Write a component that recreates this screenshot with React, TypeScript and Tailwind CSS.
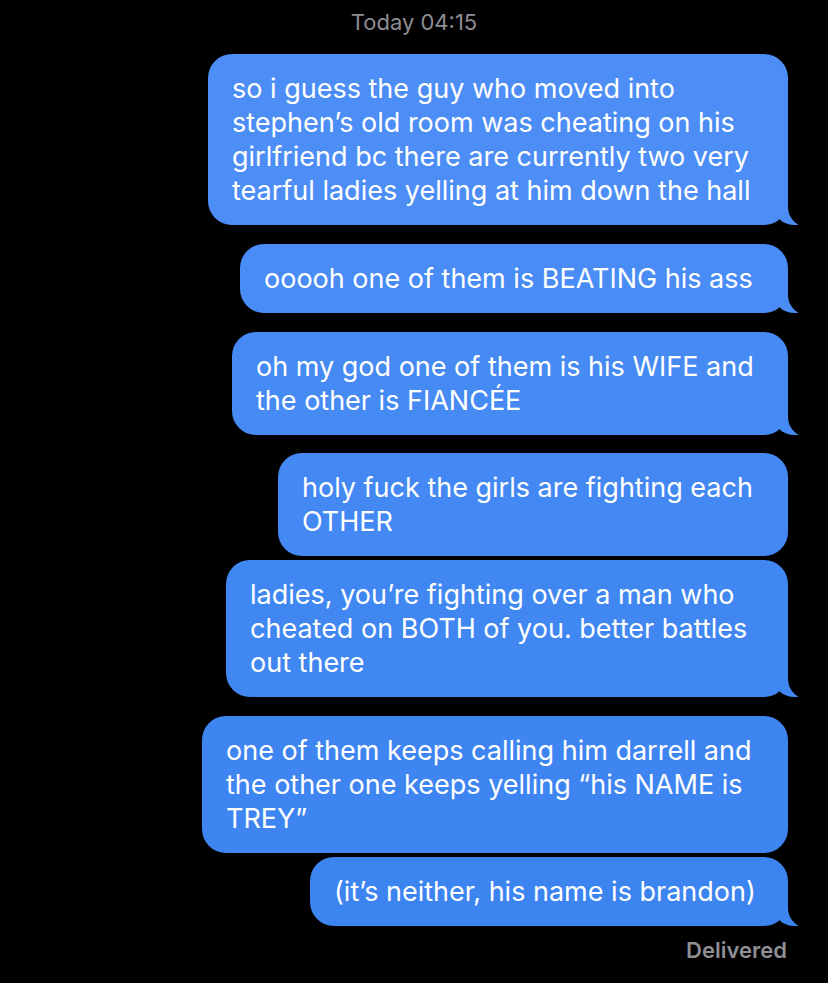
import React from 'react'

// bubbles, top to bottom. colour darkens slightly down the screen like iMessage
const messages = [
  {
    lines: [
      'so i guess the guy who moved into',
      'stephen’s old room was cheating on his',
      'girlfriend bc there are currently two very',
      'tearful ladies yelling at him down the hall',
    ],
    width: 'w-[580px]',
    gap: 'mt-0',
    tail: true,
    bg: 'bg-[#4d8ef6]',
    fill: 'fill-[#4d8ef6]',
  },
  {
    lines: ['ooooh one of them is BEATING his ass'],
    width: 'w-[548px]',
    gap: 'mt-[19px]',
    tail: true,
    bg: 'bg-[#498cf5]',
    fill: 'fill-[#498cf5]',
  },
  {
    lines: ['oh my god one of them is his WIFE and', 'the other is FIANCÉE'],
    width: 'w-[556px]',
    gap: 'mt-[19px]',
    tail: true,
    bg: 'bg-[#468af4]',
    fill: 'fill-[#468af4]',
  },
  {
    lines: ['holy fuck the girls are fighting each', 'OTHER'],
    width: 'w-[510px]',
    gap: 'mt-[18px]',
    tail: false,
    bg: 'bg-[#4388f3]',
    fill: 'fill-[#4388f3]',
  },
  {
    lines: [
      'ladies, you’re fighting over a man who',
      'cheated on BOTH of you. better battles',
      'out there',
    ],
    width: 'w-[562px]',
    gap: 'mt-1',
    tail: true,
    bg: 'bg-[#4087f2]',
    fill: 'fill-[#4087f2]',
  },
  {
    lines: [
      'one of them keeps calling him darrell and',
      'the other one keeps yelling “his NAME is',
      'TREY”',
    ],
    width: 'w-[586px]',
    gap: 'mt-[19px]',
    tail: false,
    bg: 'bg-[#3e85f1]',
    fill: 'fill-[#3e85f1]',
  },
  {
    lines: ['(it’s neither, his name is brandon)'],
    width: 'w-[478px]',
    gap: 'mt-1',
    tail: true,
    bg: 'bg-[#3c84f0]',
    fill: 'fill-[#3c84f0]',
  },
]

function Tail({ fill }: { fill: string }) {
  return (
    <svg
      className={`absolute right-[-12px] bottom-0 ${fill}`}
      width="30"
      height="25"
      viewBox="0 0 30 25"
    >
      <path d="M0 0 H18 V6 C18 14 21 20 28 24.5 C28.5 24.8 28.3 25 27.8 25 C22 25.3 16 24 12 21.5 L0 10 Z" />
    </svg>
  )
}

export default function App() {
  return (
    <div className="min-h-screen bg-black font-['Inter','Liberation_Sans',sans-serif]">
      {/* timestamp */}
      <div className="pt-[9px] h-[34px] text-center text-[22px] leading-[26px] text-[#8e8e93]">
        Today 04:15
      </div>

      <div className="mt-[20px] flex flex-col items-end pr-[40px]">
        {messages.map((m, i) => (
          <div
            key={i}
            className={`relative ${m.width} ${m.gap} ${m.bg} rounded-[24px] pl-[24px] py-[17.5px] text-white text-[27px] leading-[34px] whitespace-nowrap`}
          >
            {m.lines.map((line, j) => (
              <div key={j}>{line}</div>
            ))}
            {m.tail && <Tail fill={m.fill} />}
          </div>
        ))}

        <div className="mt-[11px] pr-[1px] text-[22px] leading-[26px] font-semibold text-[#8e8e93]">
          Delivered
        </div>
      </div>
    </div>
  )
}
